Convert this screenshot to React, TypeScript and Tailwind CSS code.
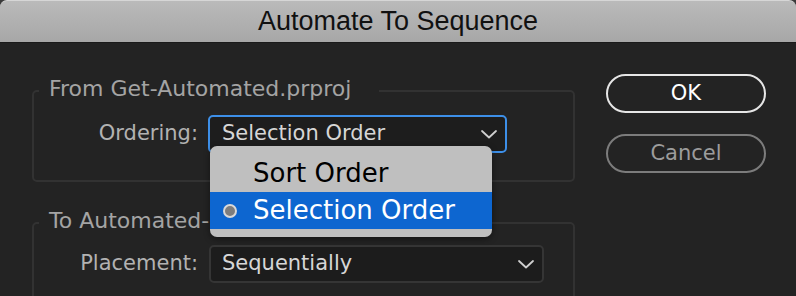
import React from "react";

function Chevron() {
  return (
    <svg width="16" height="9" viewBox="0 0 16 9" fill="none">
      <path d="M1 1l7 6.5L15 1" stroke="#cfcfcf" strokeWidth="1.8" strokeLinecap="round" strokeLinejoin="round" />
    </svg>
  );
}

function Menu() {
  return (
    <div className="absolute left-[210px] top-[146px] w-[282px] rounded-[7px] bg-[#bfbfbf] py-[8px] shadow-[0_2px_6px_rgba(0,0,0,0.45)] text-[26px]">
      <div className="flex h-[38px] items-center pl-[13px] leading-[38px] text-black">
        <span className="mr-[16px] h-[14px] w-[14px]" />
        <span>Sort Order</span>
      </div>
      <div className="flex h-[37px] items-center bg-[#0d66d0] pl-[13px] leading-[37px] text-white">
        <span className="mr-[16px] h-[14px] w-[14px] rounded-full border-2 border-[#d9d9d9] bg-[#7d7d7d]" />
        <span>Selection Order</span>
      </div>
    </div>
  );
}

export default function App() {
  return (
    <div
      className="relative h-[296px] w-[796px] overflow-hidden bg-[#3a3a3a]"
      style={{ fontFamily: '"DejaVu Sans", sans-serif' }}
    >
      <div
        className="flex h-[43px] items-center justify-center rounded-t-[7px] border-t border-b border-t-[#d6d6d6] border-b-[#1a1a1a] bg-gradient-to-b from-[#bababa] to-[#a7a7a7] text-[27px] text-[#111]"
        style={{ fontFamily: '"Liberation Sans", Arial, sans-serif' }}
      >
        Automate To Sequence
      </div>

      <div className="flex h-[253px] bg-[#232323]">
        <div className="flex w-[575px] flex-col pl-[32px] pt-[35px]">
          <fieldset className="rounded-[5px] border-2 border-[#323232] pb-[27px] pt-[11px]">
            <legend className="ml-[5px] pb-[4px] pl-[10px] pr-[28px] text-[22px] leading-[22px] text-[#a4a4a4]">
              From Get-Automated.prproj
            </legend>
            <div className="flex items-center text-[21px]">
              <span className="w-[164px] text-right text-[#b2b2b2]">Ordering:</span>
              <div className="ml-[10px] flex h-[38px] w-[299px] items-center justify-between rounded-[5px] border-2 border-[#3d8fe8] bg-[#1d1d1d] pl-[12px] pr-[8px] text-[#d6d6d6]">
                <span>Selection Order</span>
                <Chevron />
              </div>
            </div>
          </fieldset>

          <fieldset className="mt-[28px] rounded-[5px] border-2 border-[#323232] pb-[20px] pt-[9px]">
            <legend className="ml-[5px] pb-[4px] pl-[10px] pr-[120px] text-[22px] leading-[22px] text-[#a4a4a4]">
              To Automated-
            </legend>
            <div className="flex items-center text-[21px]">
              <span className="w-[164px] text-right text-[#b2b2b2]">Placement:</span>
              <div className="ml-[11px] flex h-[38px] w-[335px] items-center justify-between rounded-[5px] border-2 border-[#353535] bg-[#1c1c1c] pl-[11px] pr-[8px] text-[#d6d6d6]">
                <span>Sequentially</span>
                <Chevron />
              </div>
            </div>
          </fieldset>
        </div>

        <div className="ml-[31px] flex flex-col pt-[31px] text-[21px]">
          <button className="flex h-[39px] w-[160px] items-center justify-center rounded-full border-2 border-[#e6e6e6] text-white">
            OK
          </button>
          <button className="mt-[21px] flex h-[39px] w-[160px] items-center justify-center rounded-full border-2 border-[#7c7c7c] text-[#9c9c9c]">
            Cancel
          </button>
        </div>
      </div>

      <Menu />
    </div>
  );
}
